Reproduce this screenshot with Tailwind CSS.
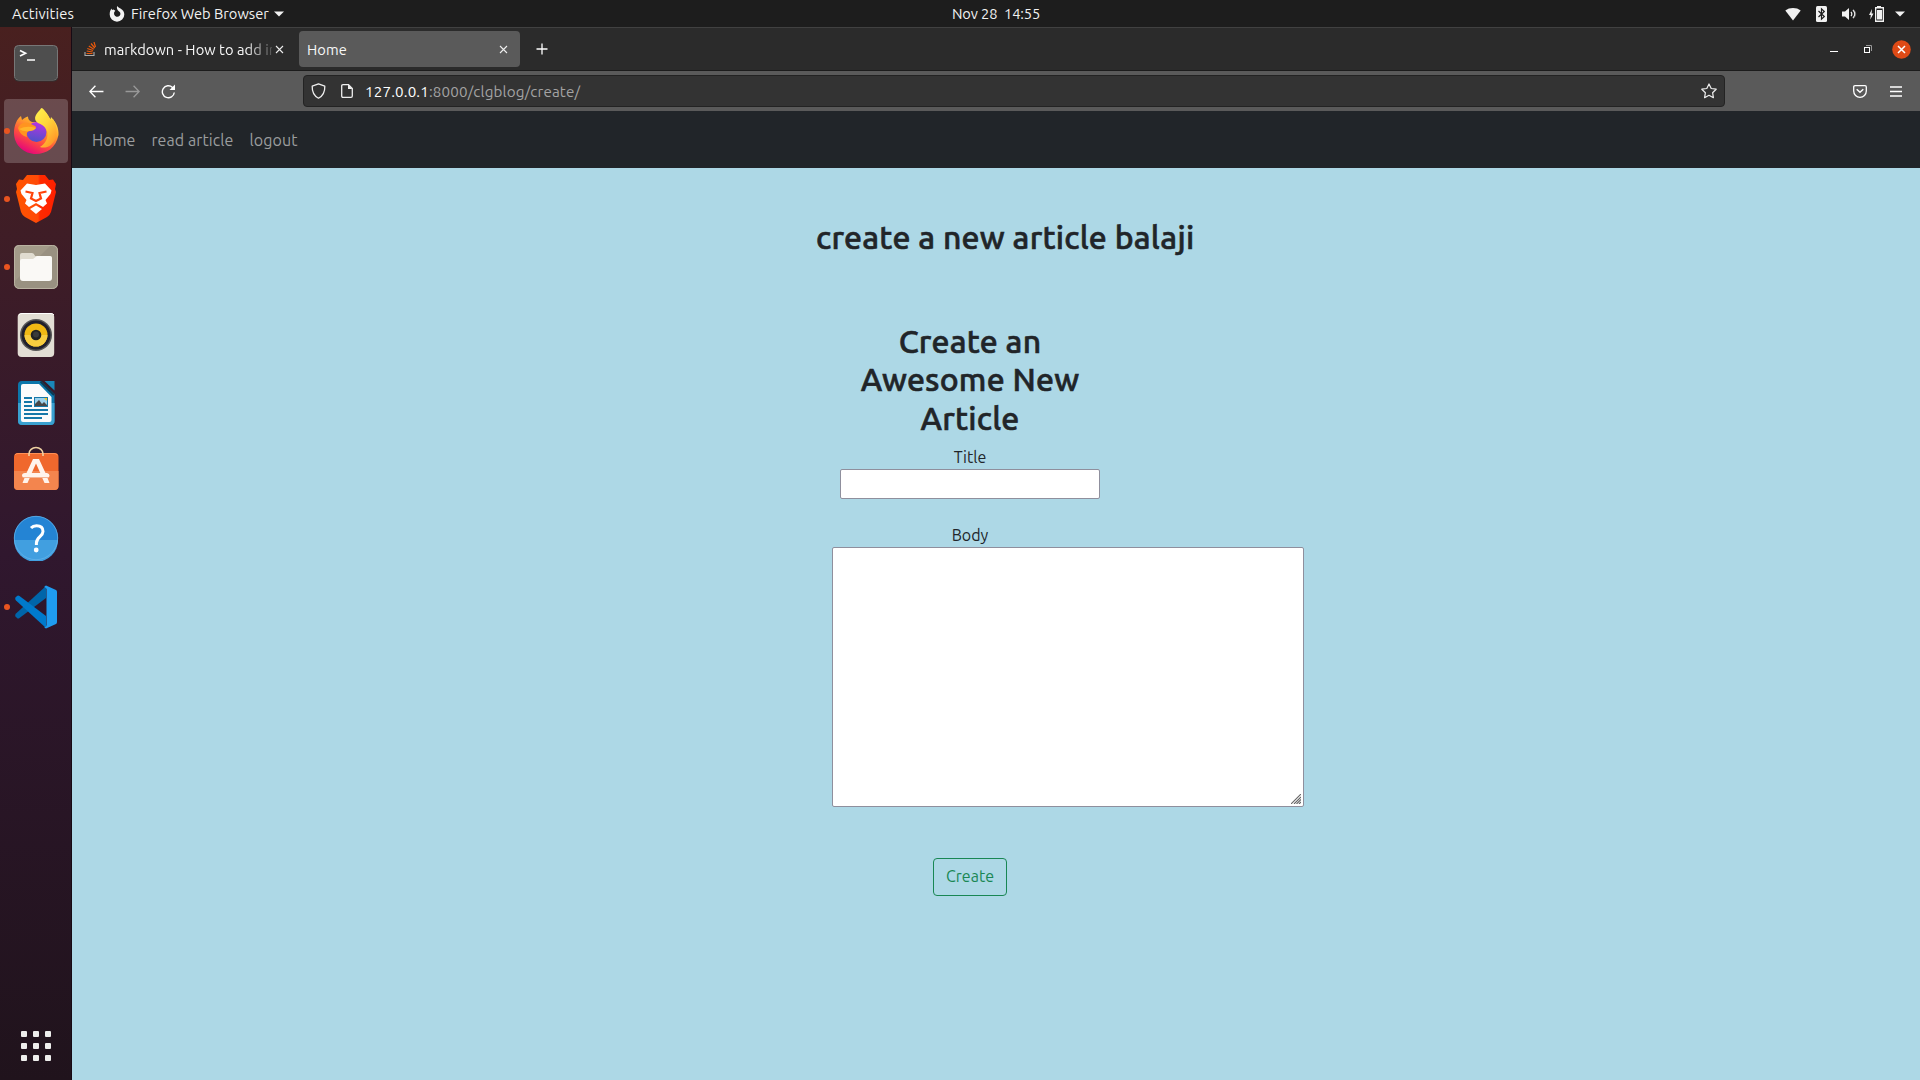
<!DOCTYPE html>
<html lang="en">
<head>
<meta charset="utf-8">
<title>Home</title>
<script src="https://cdn.jsdelivr.net/npm/@tailwindcss/browser@4"></script>
</head>
<body class="h-[1080px] w-[1920px] overflow-hidden bg-[#add8e6] font-['Ubuntu','Noto_Sans',sans-serif] text-[#212529]">
<div class="flex h-full flex-col">
  <!-- System bar -->
  <header class="grid h-[27px] shrink-0 grid-cols-3 items-center bg-[#1d1d1d] text-[14.67px] leading-[25px] text-[#f2f2f2]">
    <div class="flex items-center pl-3">
      <span class="w-[63px] tracking-[0.2px] whitespace-nowrap">Activities</span>
      <svg class="ml-[34px] size-4" viewBox="0 0 16 16"><path fill="#f2f2f2" d="M8.2 0C9 1.200 10.300 1.700 11.500 2.400C14 3.700 15.300 6 15.300 8.400A7.300 7.300 0 0 1 .7 8.400C.7 6 1.400 4 2.500 2.600L3 4L4.500 3.600L6.300 4.700L5.200 6.300C4.600 8.600 6 10.800 8.200 10.800C10.300 10.800 11.600 9.300 11.400 7.500C11.300 6.500 10.700 5.600 9.800 5.200C8.300 4.200 7.400 2 8.200 0Z"/></svg>
      <span class="ml-[6px] w-[139px] whitespace-nowrap">Firefox Web Browser</span>
      <svg class="ml-[4px] h-[6px] w-[10px]" viewBox="0 0 10 6"><path fill="#f2f2f2" d="M0 .5H10L5 5.500Z"/></svg>
    </div>
    <div class="pl-[312px]"><span class="tracking-[-0.1px] whitespace-pre">Nov 28  14:55</span></div>
    <div class="flex items-center justify-end pr-[15px]">
      <svg class="h-[14px] w-[16px]" viewBox="0 0 16 14"><path fill="#f2f2f2" d="M.3 3.500C4.500 .2 11.500 .2 15.700 3.500L8 13.500Z"/></svg>
      <svg class="ml-[15px] h-4 w-[11px]" viewBox="0 0 11 16"><rect width="11" height="16" rx="1.500" fill="#f2f2f2"/><path d="M2.500 5L8.300 10.500L5.500 13.200V2.800L8.300 5.500L2.500 11" fill="none" stroke="#1d1d1d" stroke-width="1.200"/></svg>
      <svg class="ml-[15px] h-[14px] w-[15px]" viewBox="0 0 15 14"><path fill="#f2f2f2" d="M0 4.500H3L7 1V13L3 9.500H0Z"/><path d="M9 4.800Q10.600 7 9 9.200M11 3Q14.700 7 11 11" fill="none" stroke="#f2f2f2" stroke-width="1.200"/><path d="M11.500 2.600Q16 7 11.500 11.400" fill="none" stroke="#888" stroke-width=".6"/></svg>
      <svg class="ml-[12px] h-4 w-[15px]" viewBox="0 0 15 16"><path fill="#f2f2f2" d="M3 3L0 9H1.800L1.300 13.500L4.500 7.500H2.600Z"/><path fill="#f2f2f2" fill-rule="evenodd" d="M8 0H12V1H15V16H6V1H8ZM7.300 2.500V14.500H13.700V2.500Z"/><rect x="8" y="4" width="5" height="9.500" fill="#f2f2f2"/></svg>
      <svg class="ml-[11px] h-[6px] w-[10px]" viewBox="0 0 10 6"><path fill="#f2f2f2" d="M0 .5H10L5 5.500Z"/></svg>
    </div>
  </header>

  <div class="flex min-h-0 flex-1">
    <!-- Dock -->
    <aside class="flex w-[72px] shrink-0 flex-col items-center gap-1 border-r border-[#170a14] bg-linear-to-b from-[#49201f] via-[#30172e] to-[#20131c] pt-1 pl-px">
      <div class="flex h-16 w-full items-center justify-center">
        <svg class="h-[46px] w-[46px]" viewBox="0 0 46 46"><rect x="1.500" y="5.500" width="43" height="35" rx="4" fill="#4e4e4e" stroke="#777"/><path d="M1.500 38Q2 41 5 41H41Q44 41 44.500 38" fill="none" stroke="#333"/><path d="M7 10.500L12.500 13.200L7 15.900M14 20H22" fill="none" stroke="#fff" stroke-width="1.700"/></svg>
      </div>
      <div class="relative flex h-16 w-full items-center justify-center">
        <div class="absolute inset-y-0 left-[3px] w-16 rounded bg-white/20"></div>
        <i class="absolute top-[29px] left-[3px] size-[6px] rounded-full bg-[#e95420]"></i>
        <svg class="relative size-[46px]" viewBox="0 0 46 46">
          <defs>
            <linearGradient id="fa" x1=".75" y1=".1" x2=".3" y2="1"><stop offset="0" stop-color="#fff44f"/><stop offset=".35" stop-color="#ffa52a"/><stop offset=".65" stop-color="#ff4f3e"/><stop offset="1" stop-color="#e3007f"/></linearGradient>
            <linearGradient id="fb" x1=".6" y1="0" x2=".4" y2="1"><stop offset="0" stop-color="#b833e1"/><stop offset="1" stop-color="#4d52c9"/></linearGradient>
            <linearGradient id="fc" x1="0" y1="0" x2=".7" y2="1"><stop offset="0" stop-color="#fff44f"/><stop offset=".5" stop-color="#ffd53a"/><stop offset="1" stop-color="#ff9828"/></linearGradient>
          </defs>
          <path fill="url(#fa)" d="M28 0C32 3 35 6 36.500 10L37.500 12L38 9C43 14 46 20 45.500 27C43 40 33 46 23 46C11 46 1 37 1 25C1 17 4 11 8 8L9 12C11 10 13 9 15 8.500C15 11 16 13 19 14H24Z"/>
          <circle cx="23.500" cy="24" r="10" fill="url(#fb)"/>
          <path fill="url(#fc)" d="M29 0C34 4 35 9 38.500 12L40 11C45 19 45.500 30 38 37C34 40 30 40 27 39C32 36 36 30 34 23C32 18 28 16 25 15C19 11 23 5 29 0Z"/>
          <path fill="#ff9420" d="M5 20C7 15 11 14 16 15L22 18C24 19 23 21 19 22C15 23 13 24 14 29C9 28 6 24 5 20Z"/>
          <path fill="#ffb52a" d="M6 21Q14 17 23 20Q21 23 17 23Q10 24 6 21Z"/>
        </svg>
      </div>
      <div class="relative flex h-16 w-full items-center justify-center">
        <i class="absolute top-[29px] left-[3px] size-[6px] rounded-full bg-[#e95420]"></i>
        <svg class="h-[48px] w-[42px]" viewBox="0 0 42 48">
          <defs><linearGradient id="br"><stop offset="0" stop-color="#ff5500"/><stop offset=".55" stop-color="#ff4a08"/><stop offset=".6" stop-color="#ff2a00"/><stop offset="1" stop-color="#ff2000"/></linearGradient></defs>
          <path fill="url(#br)" d="M12 0H30L34 5L38 4.500L41 9L40 14L41 17L36 37Q35 40 32 42L21 48L10 42Q7 40 6 37L1 17L2 14L1 9L4 4.500L8 5Z"/>
          <path fill="#fff" d="M12 8.500L21 10L30 8.500L36.500 15.500L35.500 19L30.500 25L32 28.500L28 32L21 28L14 32L10 28.500L11.500 25L6.500 19L5.500 15.500Z"/>
          <path d="M10.500 16.500L17.500 18L16 23.500L21 26L26 23.500L24.500 18L31.500 16.500" fill="none" stroke="#ff4208" stroke-width="2.200"/>
          <path fill="#fff" d="M21 30.500L27 34L21 39L15 34Z"/>
        </svg>
      </div>
      <div class="relative flex h-16 w-full items-center justify-center">
        <i class="absolute top-[29px] left-[3px] size-[6px] rounded-full bg-[#e95420]"></i>
        <svg class="size-[46px]" viewBox="0 0 46 46"><rect x="1" y="1" width="44" height="44" rx="5" fill="#999181"/><path d="M1 38L38 1H6Q1 1 1 6Z" fill="#aaa18f" opacity=".6"/><rect x="1.500" y="1.500" width="43" height="43" rx="5" fill="none" stroke="#b9b2a1"/><path fill="#e0dcd0" d="M7 11Q7 9 9 9H19Q21 9 22 12H36Q39 12 39 15V22H7Z"/><path fill="#faf9f6" d="M7 17Q7 15 9 15H20L24 12H37Q39 12 39 14V34Q39 37 36 37H10Q7 37 7 34Z"/></svg>
      </div>
      <div class="flex h-16 w-full items-center justify-center">
        <svg class="size-[46px]" viewBox="0 0 46 46"><rect x="4.700" y="1" width="36.500" height="44" rx="4" fill="#e2ded4"/><path d="M6 3Q7 1.500 9 1.500H38Q40 1.500 41 3" fill="none" stroke="#fff"/><circle cx="23" cy="23" r="16" fill="#555"/><circle cx="23" cy="23" r="14.500" fill="#20202c"/><circle cx="23" cy="23" r="11.500" fill="#f0b914"/><path d="M11.500 23A11.500 11.500 0 0 0 34.500 23Z" fill="#f7cd40" /><circle cx="23" cy="23" r="5.300" fill="#222"/><circle cx="23" cy="22.500" r="3" fill="#3a3a3a"/></svg>
      </div>
      <div class="flex h-16 w-full items-center justify-center">
        <svg class="size-[46px]" viewBox="0 0 46 46"><path fill="#0c76aa" d="M9 1H28L41.500 14V41Q41.500 45 37.500 45H9Q5 45 5 41V5Q5 1 9 1Z"/><path fill="#3aa1d0" d="M5 23H41.500V41Q41.500 45 37.500 45H9Q5 45 5 41Z"/><path fill="#fbfbfb" d="M10 4H26L38.500 17V40Q38.500 42 36.500 42H10Q8 42 8 40V6Q8 4 10 4Z"/><path fill="#1a87b9" d="M31.500 1H41.500V10.500Z"/><path d="M27.500 1.500L41 15" stroke="#0c3850" stroke-width="2"/><path fill="#1678a9" d="M11 17h8v2h-8zM11 21h8v2h-8zM11 25h8v2h-8zM11 29h24v2H11zM11 33h24v2H11zM11 37h18v2H11zM21 17h14v10H21z"/><path fill="#9bd1eb" d="M22 18h12v8H22z"/><path fill="#474747" d="M22 26V24L26 20L29 24L31 22L34 25V26Z"/><path fill="#f3c629" d="M31 18h3v3z"/></svg>
      </div>
      <div class="flex h-16 w-full items-center justify-center pb-1">
        <svg class="h-[46px] w-[46px]" viewBox="0 0 46 46"><rect x="1" y="7" width="44.500" height="37" rx="4" fill="#f0682d"/><path fill="#f3854e" d="M1 25H45.500V40Q45.500 44 41.500 44H5Q1 44 1 40Z"/><path d="M2 9Q3 7.500 5 7.500H41Q43 7.500 44.500 9" fill="none" stroke="#ff9055"/><path d="M16 10V8A7 6.500 0 0 1 30 8V10" fill="none" stroke="#efd2a2" stroke-width="1.600"/><path fill="#fff4ec" fill-rule="evenodd" d="M20 13H26L32.500 27H34Q36.500 27.500 36.500 29.500Q36.500 31.500 34.500 32L36.500 37H31.500L29.300 32H16.700L14.500 37H9.500L11.500 32Q9 31.500 9 29.500Q9 27 12 27H13.500ZM23 17.500L18.700 27H27.300Z"/><path d="M10 31.500H36" stroke="#f3a47c" stroke-width=".8"/></svg>
      </div>
      <div class="flex h-16 w-full items-center justify-center pb-[2px]">
        <svg class="size-[46px]" viewBox="0 0 46 46"><circle cx="23" cy="23" r="22" fill="#2484d4"/><path fill="#419fe0" d="M1 25H45A22 22 0 0 1 1 25Z"/><circle cx="23" cy="23" r="21.700" fill="none" stroke="#62b3ea" stroke-width=".8"/><path d="M18 13Q20 10.800 23.500 10.800C28 10.800 30 13 30 16.500C30 21.500 23.400 22 23.400 28V30" fill="none" stroke="#fff" stroke-width="3"/><circle cx="23.200" cy="35" r="2.400" fill="#fff"/></svg>
      </div>
      <div class="relative flex h-16 w-full items-center justify-center">
        <i class="absolute top-[29px] left-[3px] size-[6px] rounded-full bg-[#e95420]"></i>
        <svg class="size-[46px]" viewBox="0 0 46 46"><path fill="#0065a9" d="M33 2V14L6.500 34Q5 35 4 34L2.500 32.500Q1.500 31 3 29.500Z"/><path fill="#007acc" d="M33 44V32L6.500 12Q5 11 4 12L2.500 13.500Q1.500 15 3 16.500Z"/><path fill="#1f9cf0" d="M33 1.500L43 6Q44 6.500 44 8V38Q44 39.500 43 40L33 44.500Q31 44 31.500 42.500Q33 44 33.500 41V5Q33 3 31.500 3.500Q31 2 33 1.500Z"/></svg>
      </div>
      <div class="mt-auto mb-[19px] grid grid-cols-3 gap-[6px]">
        <i class="size-[6px] rounded-[1px] bg-[#eeeeec]"></i><i class="size-[6px] rounded-[1px] bg-[#eeeeec]"></i><i class="size-[6px] rounded-[1px] bg-[#eeeeec]"></i>
        <i class="size-[6px] rounded-[1px] bg-[#eeeeec]"></i><i class="size-[6px] rounded-[1px] bg-[#eeeeec]"></i><i class="size-[6px] rounded-[1px] bg-[#eeeeec]"></i>
        <i class="size-[6px] rounded-[1px] bg-[#eeeeec]"></i><i class="size-[6px] rounded-[1px] bg-[#eeeeec]"></i><i class="size-[6px] rounded-[1px] bg-[#eeeeec]"></i>
      </div>
    </aside>

    <!-- Browser window -->
    <div class="flex min-w-0 flex-1 flex-col">
      <div class="flex h-11 shrink-0 items-center border-t border-b border-t-[#414141] border-b-[#1c1c1c] bg-[#2b2b2b] pr-[9px] pl-3 text-[14.67px] text-[#f7f7f7]">
        <svg class="h-[15px] w-3" viewBox="0 0 12 15"><path d="M1 10V13.500H10V10" fill="none" stroke="#aaa" stroke-width="1.100"/><path d="M2.500 11.500H8.500M2.700 9L8.700 10M3.300 6.500L9 8.500M4.800 4L9.800 7.300M7 1.500L10.800 6M10 0L11.500 5" fill="none" stroke="#e8590c" stroke-width="1.200"/></svg>
        <div class="ml-2 w-[168px] overflow-hidden pt-[2px] tracking-[0.06px] whitespace-nowrap mask-r-from-[142px] mask-r-to-[174px]">markdown - How to add image</div>
        <svg class="ml-[3px] size-[9px]" viewBox="0 0 9 9"><path d="M1 1L8 8M8 1L1 8" stroke="#eee" stroke-width="1.100"/></svg>
        <div class="ml-[15px] flex h-9 w-[221px] items-center rounded bg-[#5a5a5a] pr-3 pl-2">
          <span class="pt-[2px] tracking-[0.1px]">Home</span>
          <svg class="ml-auto size-[9px]" viewBox="0 0 9 9"><path d="M1 1L8 8M8 1L1 8" stroke="#eee" stroke-width="1.100"/></svg>
        </div>
        <svg class="ml-4 size-[12px]" viewBox="0 0 12 12"><path d="M6 .5V11.500M.5 6H11.500" stroke="#fff" stroke-width="1.300"/></svg>
        <i class="mt-[4px] ml-auto h-px w-2 bg-white"></i>
        <svg class="ml-[26px] size-2" viewBox="0 0 8 8"><path d="M2 .5H7.500V6" fill="none" stroke="#999"/><rect x=".5" y="2.500" width="5" height="5" fill="none" stroke="#fff"/></svg>
        <svg class="ml-[20px] size-[19px]" viewBox="0 0 19 19"><circle cx="9.500" cy="9.500" r="9.300" fill="#df4a16"/><path d="M6 6L13 13M13 6L6 13" stroke="#fff" stroke-width="1.500"/></svg>
      </div>
      <div class="flex h-10 shrink-0 items-center bg-[#5a5a5a] pr-[18px] pl-[17px]">
        <svg class="h-[13px] w-[15px]" viewBox="0 0 14 12"><path d="M13.500 6H1M6 .7L.8 6L6 11.300" fill="none" stroke="#fff" stroke-width="1.300"/></svg>
        <svg class="ml-[21px] h-[13px] w-[15px]" viewBox="0 0 14 12"><path d="M.5 6H13M8 .7L13.200 6L8 11.300" fill="none" stroke="#999" stroke-width="1.200"/></svg>
        <svg class="ml-[21px] size-[15px]" viewBox="0 0 15 15"><path d="M13.300 8.500A6 6 0 1 1 11.500 3.400L13 5" fill="none" stroke="#fff" stroke-width="1.400"/><path d="M14 .5V6H8.500Z" fill="#fff"/></svg>
        <div class="ml-[127px] flex h-8 w-[1422px] items-center rounded border border-[#232323] bg-[#333] px-[7px] text-[15.2px] tracking-[0.15px] text-[#a3a3a3]">
          <svg class="h-4 w-[15px]" viewBox="0 0 14 16"><path d="M7 .8L13.300 3.200C13.500 8.500 12 12.500 7 15.200C2 12.500 .5 8.500 .7 3.200Z" fill="none" stroke="#eee" stroke-width="1.300" stroke-linejoin="round"/></svg>
          <svg class="ml-[15px] h-[14px] w-3" viewBox="0 0 12 14"><path d="M2 .7H7.500L11.300 4.500V12Q11.300 13.300 10 13.300H2Q.7 13.300 .7 12V2Q.7 .7 2 .7Z" fill="none" stroke="#eee" stroke-width="1.300"/><path d="M7 .5V5H11.500Z" fill="#eee"/></svg>
          <div class="ml-3 pt-[2px]"><span class="text-white">127.0.0.1</span><span>:8000/clgblog/create/</span></div>
          <svg class="ml-auto size-4" viewBox="0 0 16 16"><path d="M8 1L10.200 5.500L15.200 6.200L11.600 9.700L12.400 14.700L8 12.300L3.600 14.700L4.400 9.700L.8 6.200L5.800 5.500Z" fill="none" stroke="#eee" stroke-width="1.200" stroke-linejoin="round"/></svg>
        </div>
        <svg class="ml-auto h-[13px] w-[14px]" viewBox="0 0 14 13"><path d="M2 .7H12Q13.300 .7 13.300 2V6A6.300 6.300 0 0 1 .7 6V2Q.7 .7 2 .7Z" fill="none" stroke="#fff" stroke-width="1.300"/><path d="M3.700 4.300L7 7.300L10.300 4.300" fill="none" stroke="#fff" stroke-width="1.500"/></svg>
        <svg class="ml-[23px] h-[11px] w-3" viewBox="0 0 12 11"><path d="M0 1H12M0 5.500H12M0 10H12" stroke="#fff" stroke-width="1.300"/></svg>
      </div>

      <!-- Page -->
      <nav class="flex h-[57px] shrink-0 items-center gap-4 bg-[#212529] pl-5 text-base tracking-[0.08px] text-[#9b9d9e]">
        <a>Home</a><a>read article</a><a>logout</a>
      </nav>
      <main class="flex-1 bg-[#add8e6] pt-[50px] pl-[744px]">
        <h1 class="w-fit text-[32px] leading-[38.4px] font-medium tracking-[0.2px] whitespace-nowrap [-webkit-text-stroke:0.6px_#212529]">create a new article balaji</h1>
        <form class="mt-[65.4px] ml-4 w-[276px] text-center text-base leading-6">
          <h2 class="mb-2 text-[32px] leading-[38.4px] font-medium tracking-[0.2px] [-webkit-text-stroke:0.6px_#212529]">Create an<br>Awesome New<br>Article</h2>
          <label class="block">Title</label>
          <input class="mx-auto block h-[30px] w-[260px] rounded-xs border border-[#8f8f9d] bg-white">
          <label class="mt-6 block">Body</label>
          <div class="relative h-[260px] w-[472px]">
            <textarea class="block size-full resize-none rounded-xs border border-[#8f8f9d] bg-white"></textarea>
            <svg class="absolute right-[3px] bottom-[3px] size-[10px]" viewBox="0 0 10 10"><path d="M0 10L10 0M3 10L10 3M5.500 10L10 5.500M8 10L10 8" stroke="#666" stroke-width="1.100"/></svg>
          </div>
          <button type="button" class="mt-[51px] h-[38px] w-[74px] rounded border border-[#198754] pb-[2px] text-[#198754]">Create</button>
        </form>
      </main>
    </div>
  </div>
</div>
</body>
</html>
